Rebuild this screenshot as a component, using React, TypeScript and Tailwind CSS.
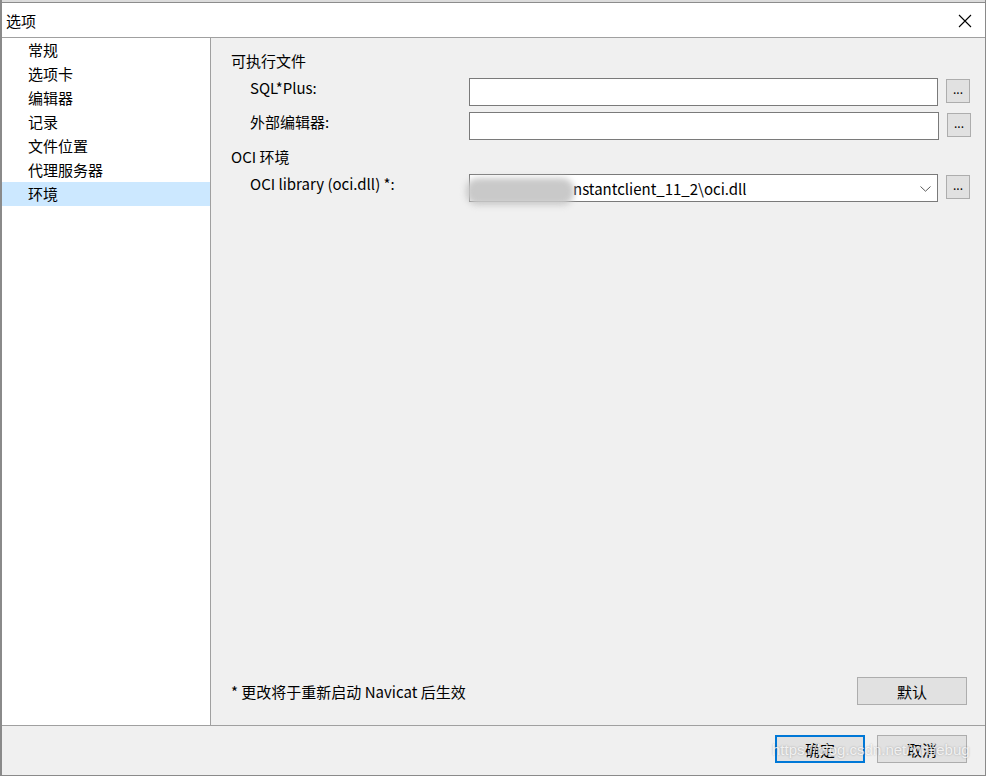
import React from "react";

const navItems = ["常规", "选项卡", "编辑器", "记录", "文件位置", "代理服务器", "环境"];

function DotsButton({ className = "" }: { className?: string }) {
  return (
    <button
      className={`shrink-0 w-[24px] h-[24px] bg-[#e1e1e1] border border-[#adadad] text-[12px] leading-none text-black flex items-end justify-center pb-[7px] ${className}`}
    >
      ...
    </button>
  );
}

function FieldRow({ label, children }: { label: string; children: React.ReactNode }) {
  return (
    <div className="flex items-start">
      <div className="shrink-0 w-[238px] pl-[19px] leading-[20px] text-black">{label}</div>
      {children}
      <DotsButton className="mt-[1px]" />
    </div>
  );
}

export default function App() {
  return (
    <div
      className="w-[986px] h-[776px] flex flex-col bg-white border-l-2 border-r border-b border-[#8a8a8a] text-[15px] text-black relative overflow-hidden"
      style={{ fontFamily: '"Noto Sans CJK SC", "Noto Sans", sans-serif' }}
    >
      {/* top strip of the window behind */}
      <div className="h-[2px] bg-[#dcdcdc]" />
      {/* title bar */}
      <div className="h-[36px] border-t border-[#8c8c8c] border-b border-b-[#a0a0a0] flex items-center justify-between pl-[4px] pr-[13px]">
        <span className="leading-none">选项</span>
        <svg width="14" height="14" viewBox="0 0 14 14" className="mt-[1px]">
          <path d="M1 1 L13 13 M13 1 L1 13" stroke="#000" strokeWidth="1.1" fill="none" />
        </svg>
      </div>

      {/* main */}
      <div className="flex-1 flex min-h-0">
        <aside className="shrink-0 w-[209px] bg-white border-r border-[#a0a0a0]">
          {navItems.map((item) => (
            <div
              key={item}
              className={`h-[24px] leading-[24px] pl-[26px] ${item === "环境" ? "bg-[#cce8ff]" : ""}`}
            >
              {item}
            </div>
          ))}
        </aside>

        <section className="flex-1 min-w-0 bg-[#f0f0f0] flex flex-col pl-[20px] pr-[18px] pt-[11px] pb-[20px]">
          <div className="h-[24px] leading-[24px]">可执行文件</div>
          <div className="mt-[5px]">
            <FieldRow label="SQL*Plus:">
              <div className="shrink-0 w-[469px] h-[28px] bg-white border border-[#7a7a7a] mr-[8px]" />
            </FieldRow>
          </div>
          <div className="mt-[6px]">
            <FieldRow label="外部编辑器:">
              <div className="shrink-0 w-[470px] h-[28px] bg-white border border-[#7a7a7a] mr-[8px]" />
            </FieldRow>
          </div>
          <div className="h-[24px] leading-[24px] mt-[5px]">OCI 环境</div>
          <div className="mt-[5px]">
            <FieldRow label="OCI library (oci.dll) *:">
              <div className="shrink-0 relative w-[469px] h-[28px] bg-white border border-[#7a7a7a] mr-[8px] flex items-center">
                <span className="pl-[103px] leading-none">nstantclient_11_2\oci.dll</span>
                <svg width="11" height="6" viewBox="0 0 11 6" className="absolute right-[6px] top-[11px]">
                  <path d="M0.5 0.5 L5.5 5.2 L10.5 0.5" stroke="#5a5a5a" strokeWidth="1" fill="none" />
                </svg>
                {/* blurred path prefix */}
                <div className="absolute left-[-4px] top-[3px] w-[108px] h-[27px] rounded-[12px] bg-[#c9c9c9] blur-[3px]" />
              </div>
            </FieldRow>
          </div>

          <div className="mt-auto flex items-center justify-between">
            <span className="leading-none mt-[1px]">* 更改将于重新启动 Navicat 后生效</span>
            <button className="w-[110px] h-[28px] bg-[#e1e1e1] border border-[#adadad] leading-none">
              默认
            </button>
          </div>
        </section>
      </div>

      {/* footer */}
      <div className="h-[50px] border-t border-[#a0a0a0] bg-[#f0f0f0] flex justify-end items-start gap-[12px] pt-[9px] pr-[18px]">
        <button className="w-[90px] h-[28px] bg-[#e1e1e1] border-2 border-[#0078d7] leading-none">确定</button>
        <button className="w-[90px] h-[28px] bg-[#e1e1e1] border border-[#adadad] leading-none">取消</button>
      </div>

      {/* watermark */}
      <span
        className="absolute left-[770px] top-[742px] text-[15px] leading-none text-white/80 pointer-events-none whitespace-nowrap"
        style={{ fontFamily: '"Liberation Sans", sans-serif', textShadow: "0 0 2px rgba(0,0,0,0.3)" }}
      >
        https://blog.csdn.net/xinjiebug
      </span>
    </div>
  );
}
